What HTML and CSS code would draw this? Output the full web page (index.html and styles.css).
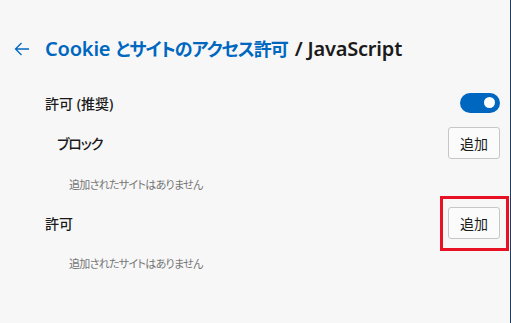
FILE: index.html
```html
<!DOCTYPE html>
<html lang="ja">
<head>
    <meta charset="UTF-8">
    <meta name="viewport" content="width=device-width, initial-scale=1.0">
    <title>JavaScript</title>
    <link rel="stylesheet" href="styles.css">
</head>
<body>
    <div class="page">
        <div class="header">
            <span class="back">
                <svg width="16" height="14" viewBox="0 0 16 14">
                    <path d="M15 7H1.5M7.5 1L1.5 7l6 6" fill="none" stroke="#0067c0" stroke-width="1.3"/>
                </svg>
            </span>
            <h1><span class="crumb">Cookie <span class="jp">とサイトのアクセス許可</span></span> / JavaScript</h1>
        </div>

        <div class="row main-row">
            <span class="label">許可 (推奨)</span>
            <span class="toggle on"><span class="knob"></span></span>
        </div>

        <div class="row sub-row">
            <span class="label kana">ブロック</span>
            <button class="add-button">追加</button>
        </div>
        <div class="empty">追加されたサイトはありません</div>

        <div class="row main-row allow-row">
            <span class="label">許可</span>
            <span class="button-wrap">
                <button class="add-button">追加</button>
                <span class="highlight"></span>
            </span>
        </div>
        <div class="empty last">追加されたサイトはありません</div>
    </div>
</body>
</html>
```

FILE: styles.css
```css
html, body {
    margin: 0;
    padding: 0;
}
body {
    font-family: "Noto Sans", "Noto Sans CJK JP", sans-serif;
    font-feature-settings: "palt";
    background-color: #f7f7f7;
    color: #1b1b1b;
}
.page {
    width: 511px;
    height: 323px;
    box-sizing: border-box;
    border-right: 1px solid #1c3d5c;
    padding-right: 10px;
    overflow: hidden;
}
.header {
    display: flex;
    align-items: center;
    height: 26px;
    padding: 36px 0 20px 0;
}
.back {
    display: flex;
    flex: none;
    width: 45px;
    padding-left: 14px;
    box-sizing: border-box;
}
h1 {
    margin: 0;
    font-size: 20px;
    font-weight: 600;
    line-height: 26px;
    color: #1b1b1b;
    letter-spacing: -0.2px;
    white-space: nowrap;
}
.crumb {
    color: #0067c0;
}
.jp {
    font-size: 18px;
    letter-spacing: -1px;
    margin-right: 2px;
}
.row {
    display: flex;
    align-items: center;
    justify-content: space-between;
    padding-left: 45px;
}
.main-row {
    height: 41px;
}
.allow-row {
    height: 36px;
}
.sub-row {
    height: 40px;
    padding-left: 57px;
}
.label {
    font-size: 14px;
    font-weight: 500;
}
.kana {
    letter-spacing: -1px;
}
.toggle {
    width: 40px;
    height: 20px;
    border-radius: 10px;
    background-color: #0067c0;
    display: flex;
    align-items: center;
    justify-content: flex-end;
    padding-right: 5px;
    box-sizing: border-box;
}
.knob {
    width: 11px;
    height: 11px;
    border-radius: 50%;
    background-color: white;
}
.add-button {
    width: 52px;
    height: 32px;
    font-family: inherit;
    font-size: 14px;
    color: #1b1b1b;
    background-color: #fbfbfb;
    border: 1px solid #c6c6c6;
    border-radius: 3px;
    padding: 0;
}
.button-wrap {
    position: relative;
    display: flex;
}
.highlight {
    position: absolute;
    top: -11px;
    left: -8px;
    right: -9px;
    bottom: -12px;
    border: 3px solid #e81123;
}
.empty {
    height: 42px;
    display: flex;
    align-items: center;
    padding-left: 69px;
    font-size: 11px;
    letter-spacing: -0.7px;
    color: #767676;
}
.empty.last {
    height: 44px;
}
```
